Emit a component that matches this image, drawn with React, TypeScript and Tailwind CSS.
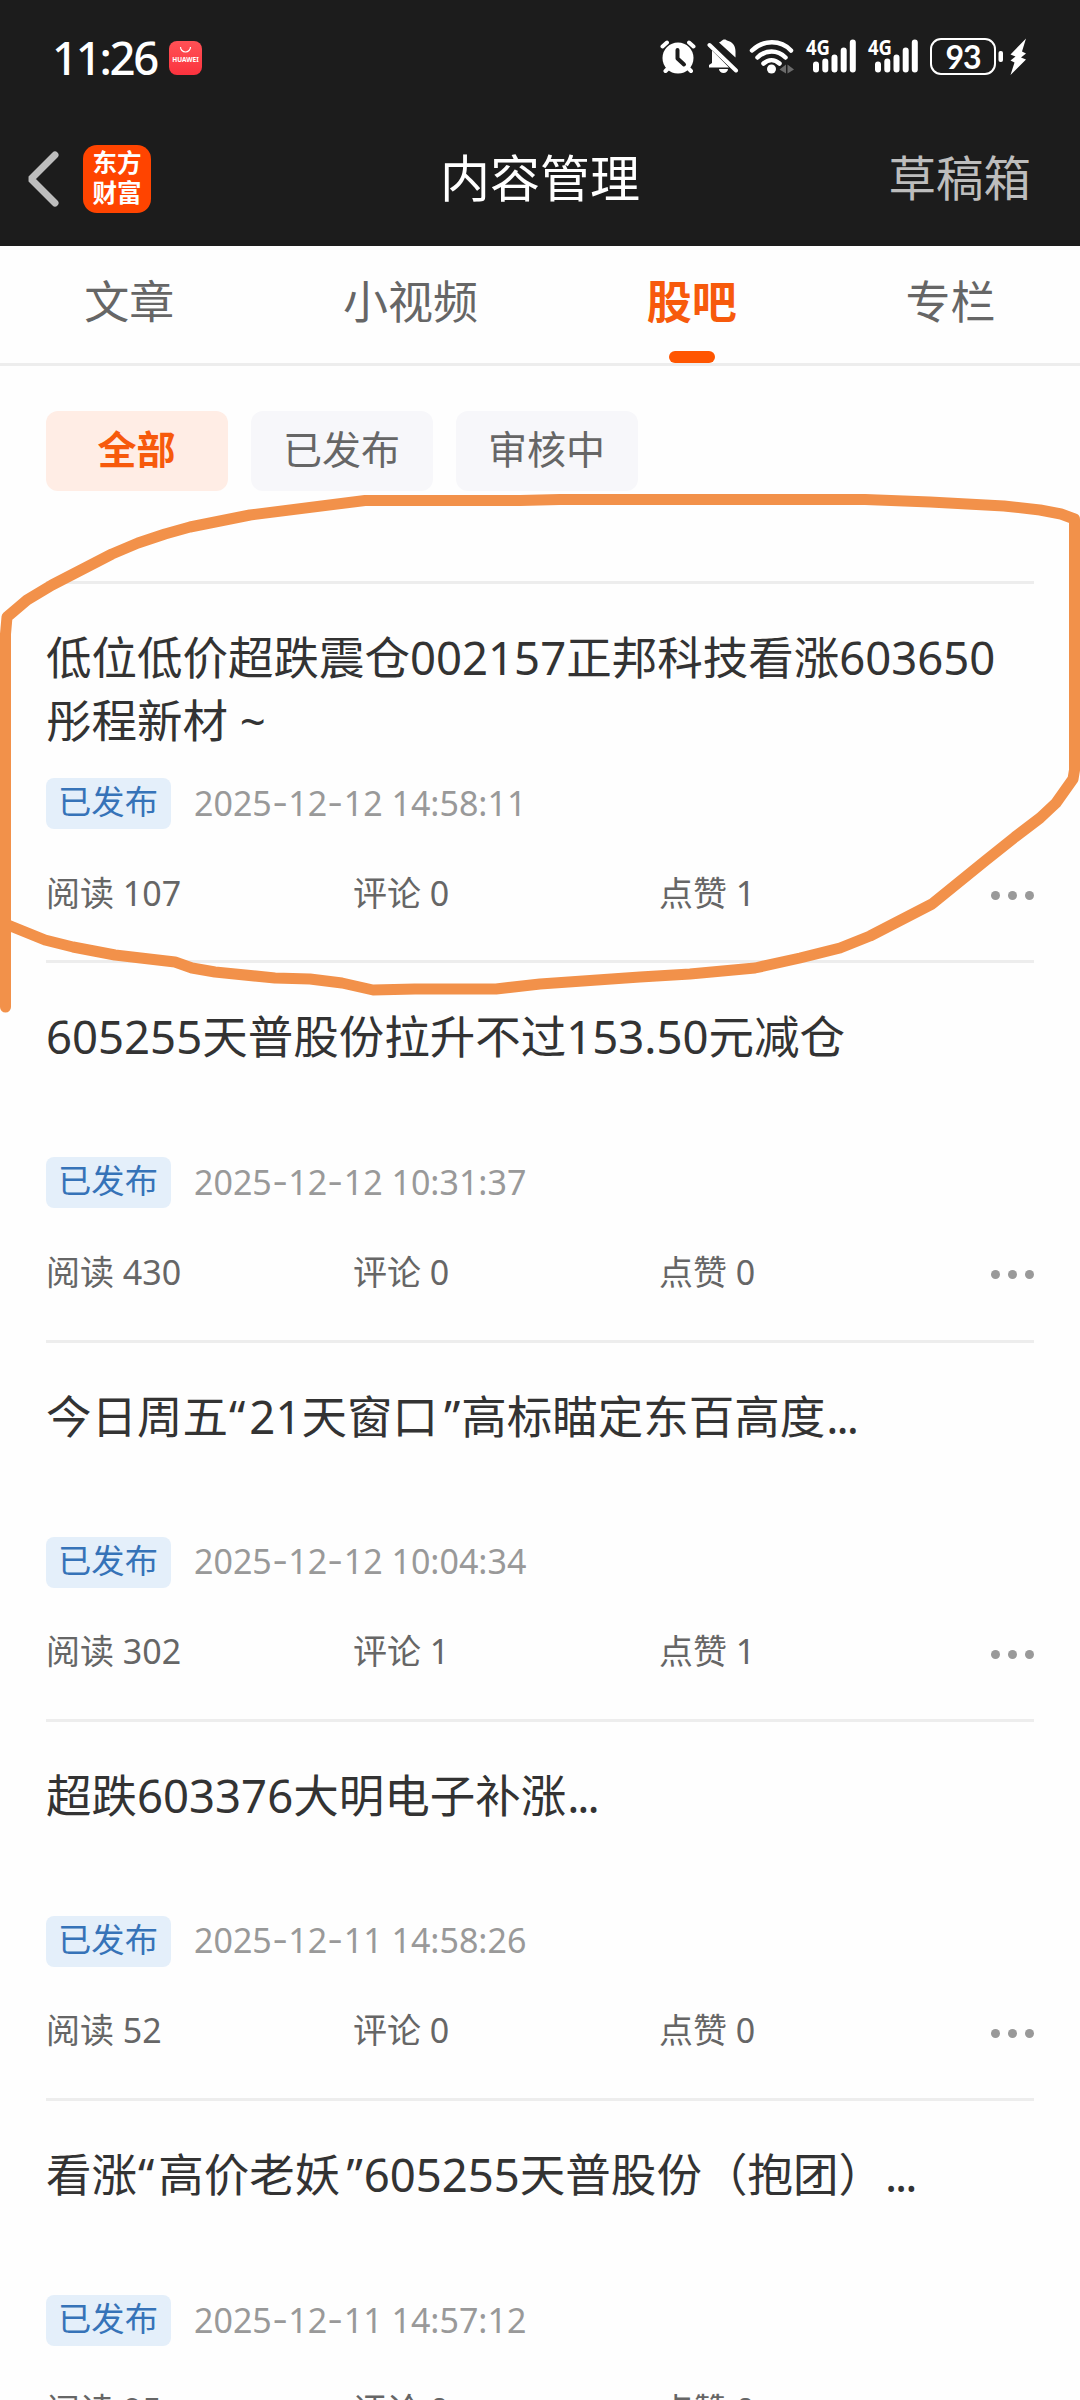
import { useState } from 'react';

interface Post {
  title: string;
  more?: boolean;
  time: string;
  reads: number;
  comments: number;
  likes: number;
}

const TABS = ['文章', '小视频', '股吧', '专栏'];
const FILTERS = ['全部', '已发布', '审核中'];

const POSTS: Post[] = [
  { title: '低位低价超跌震仓002157正邦科技看涨603650彤程新材 ~', time: '2025-12-12 14:58:11', reads: 107, comments: 0, likes: 1 },
  { title: '605255天普股份拉升不过153.50元减仓', time: '2025-12-12 10:31:37', reads: 430, comments: 0, likes: 0 },
  { title: '今日周五“21天窗口”高标瞄定东百高度', more: true, time: '2025-12-12 10:04:34', reads: 302, comments: 1, likes: 1 },
  { title: '超跌603376大明电子补涨', more: true, time: '2025-12-11 14:58:26', reads: 52, comments: 0, likes: 0 },
  { title: '看涨“高价老妖”605255天普股份（抱团）', more: true, time: '2025-12-11 14:57:12', reads: 95, comments: 0, likes: 0 },
];

function Signal() {
  return (
    <svg width="50" height="36" viewBox="0 0 50 36" className="overflow-visible" fill="none" stroke="#fff" strokeWidth="6" strokeLinecap="round">
      <text x="0" y="17" fill="#fff" stroke="none" fontSize="21" fontWeight="700" textLength="24" lengthAdjust="spacingAndGlyphs" fontFamily="Noto Sans, sans-serif">4G</text>
      <path d="M10 26.5v5M19.3 23.5v8M28.5 19.5v12M37.7 12.5v19M46.8 4.5v27" />
    </svg>
  );
}

function StatusBar() {
  return (
    <div className="flex h-[116px] items-start pl-[52px] pt-[38px] text-white">
      <span className="-mt-[1px] h-[41px] w-[117px] whitespace-nowrap text-[45.5px] leading-[40px] font-medium tracking-[-2.3px]">11:26</span>
      <div className="mt-[3px] flex h-[34px] w-[33px] flex-col items-center rounded-[8px] bg-gradient-to-b from-[#ff5055] to-[#fb323e]">
        <svg width="13" height="8" viewBox="0 0 13 8" className="mt-[5px]" fill="none" stroke="#fff" strokeWidth="1.2">
          <path d="M1.5 1a5 5 0 0 0 10 0" />
        </svg>
        <span className="mt-[2px] text-[6.5px] leading-[8px] font-bold">HUAWEI</span>
      </div>
      <div className="ml-[458px] flex h-[36px] items-start">
        <svg width="36" height="36" viewBox="0 0 36 36">
          <g fill="none" stroke="#fff" strokeWidth="4" strokeLinecap="round">
            <path d="M2.5 8.5 7 4.5M33.5 8.5 29 4.5M5.5 33l4-4M31 33l-4-4" />
          </g>
          <circle cx="18" cy="20" r="15.5" fill="#fff" />
          <path d="M17.5 12v8.5l6.5 6" fill="none" stroke="#1c1c1c" strokeWidth="4" strokeLinecap="round" strokeLinejoin="round" />
        </svg>
        <svg width="32" height="36" viewBox="0 0 32 36" className="ml-[11px]">
          <path d="M5 12v13l-3 2v2.500h20zM12 4.500c1-.5 2-1 3-2 1-1.500 4-1.500 5 0 6 1.500 8.500 5.500 8.500 11v6z" fill="#fff" />
          <path d="M12 31h9a4.500 4 0 0 1-9 0z" fill="#fff" />
          <path d="M2.500 5.500 29.500 32" stroke="#1c1c1c" strokeWidth="6.500" />
          <path d="M2.500 7 29 32.500" stroke="#fff" strokeWidth="4" strokeLinecap="round" />
        </svg>
        <svg width="46" height="36" viewBox="0 0 46 36" className="ml-[10px]">
          <g fill="none" stroke="#fff" strokeWidth="4.500" strokeLinecap="round">
            <path d="M3 12.500c11-11 29-11 39 0M8.500 19.500c8-8 20-8 28 0M14.500 25.500c5-4.500 11-4.500 16 0" />
          </g>
          <circle cx="22.500" cy="31" r="4.500" fill="#fff" />
          <path d="M30.500 31.500l6.500-5v9zM45 31.500l-6.500-5v9z" fill="#6b6b6b" />
        </svg>
        <div className="ml-[11px] flex gap-[12px]">
          <Signal />
          <Signal />
        </div>
        <div className="ml-[12px] flex h-[37px] w-[66px] items-center justify-center rounded-[11px] border-[2.500px] border-white font-['Lato',sans-serif] text-[32px] leading-[31px] font-bold tracking-[-1px]">93</div>
        <svg width="32" height="38" viewBox="0 0 32 38" className="ml-[2px]" fill="#fff">
          <rect x="0.500" y="13" width="4.500" height="11" rx="2" />
          <path d="M28 .5 12.500 16.500l5 2-5 4 4 2-4 12.500 15.500-15.500-5-2 5-4-4-2z" />
        </svg>
      </div>
    </div>
  );
}

function NavBar() {
  return (
    <div className="grid h-[130px] grid-cols-[1fr_auto_1fr] items-start px-[27px] leading-[60px]">
      <div className="flex items-center pt-[29px]">
        <svg width="32" height="56" viewBox="0 0 32 56" fill="none" stroke="#bdbdbd" strokeWidth="7" strokeLinejoin="bevel" strokeLinecap="round">
          <path d="M28 4 4 28l24 24" />
        </svg>
        <div className="ml-[24px] flex h-[68px] w-[68px] flex-col items-center justify-center rounded-[14px] bg-[#ff4400] text-[24.500px] leading-[30px] font-bold text-white">
          <span className="-mt-[2px]">东方</span>
          <span>财富</span>
        </div>
      </div>
      <h1 className="pt-[32px] text-[50px] text-white">内容管理</h1>
      <span className="mr-[22px] justify-self-end pt-[32px] text-[47.500px] text-[#bdbdbd]">草稿箱</span>
    </div>
  );
}

// curly quotes get a little extra room on the right of “ and the left of ”
function Title({ text }: { text: string }) {
  return (
    <>
      {text.split(/([“”])/).map((part, i) => {
        if (part === '“') return <span key={i} className="ml-[1px] mr-[4px]">“</span>;
        if (part === '”') return <span key={i} className="ml-[6px] mr-[1px]">”</span>;
        return part;
      })}
    </>
  );
}

function DateText({ value }: { value: string }) {
  return (
    <time className="ml-[23px] -mt-[1px] text-[34px] whitespace-pre text-[#999]">
      {value.split(/(-)/).map((part, i) =>
        part === '-' ? (
          <span key={i} className="inline-block w-[16.500px] -translate-y-[2px] scale-x-[1.35] text-center">-</span>
        ) : part
      )}
    </time>
  );
}

function PostItem({ post }: { post: Post }) {
  return (
    <li className="h-[379.250px] border-t-[3px] border-[#ededed] pt-[42px]">
      <h2 className="h-[126px] text-[45.500px] leading-[63px] text-[#333]">
        <Title text={post.title} />
        {post.more && <span className="ml-[1px] tracking-[-2px]">...</span>}
      </h2>
      <div className="mt-[26px] flex h-[51px] items-center">
        <span className="flex h-[51px] w-[125px] items-center justify-center rounded-[8px] bg-[#e4effa] pr-[1px] pb-[3px] text-[33.300px] text-[#3673b8]">已发布</span>
        <DateText value={post.time} />
      </div>
      <div className="mt-[40px] flex h-[48px] items-center text-[34px] text-[#666]">
        <span className="w-[307px]">阅读 {post.reads}</span>
        <span className="w-[306px]">评论 {post.comments}</span>
        <span>点赞 {post.likes}</span>
        <button className="mt-[5px] ml-auto flex gap-[8px]">
          <i className="size-[9px] rounded-full bg-[#999]" />
          <i className="size-[9px] rounded-full bg-[#999]" />
          <i className="size-[9px] rounded-full bg-[#999]" />
        </button>
      </div>
    </li>
  );
}

export default function App() {
  const [tab, setTab] = useState('股吧');
  const [filter, setFilter] = useState('全部');

  return (
    <div className="relative h-[2400px] w-[1080px] overflow-hidden bg-[#fefefe] font-['Noto_Sans','Noto_Sans_CJK_SC',sans-serif]">
      <header className="bg-[#1c1c1c]">
        <StatusBar />
        <NavBar />
      </header>

      <nav className="flex h-[120px] justify-around border-b-[3px] border-[#ededed]">
        {TABS.map((t) => (
          <button
            key={t}
            onClick={() => setTab(t)}
            className={`flex flex-col items-center justify-between pt-[26px] text-[45px] leading-[60px] ${
              tab === t ? 'font-bold text-[#f75a0c]' : 'text-[#666]'
            }`}
          >
            {t}
            {tab === t && <span className="h-[12px] w-[46px] rounded-full bg-[#ff5500]" />}
          </button>
        ))}
      </nav>

      <div className="flex h-[215px] gap-[23px] px-[46px] pt-[45px]">
        {FILTERS.map((f) => (
          <button
            key={f}
            onClick={() => setFilter(f)}
            className={`h-[80px] w-[182px] rounded-[12px] pr-[1px] pb-[4px] text-[39px] leading-[76px] ${
              filter === f ? 'bg-[#ffede5] font-bold text-[#f75a0c]' : 'bg-[#f7f7fa] text-[#666]'
            }`}
          >
            {f}
          </button>
        ))}
      </div>

      <ul className="px-[46px]">
        {POSTS.map((p) => (
          <PostItem key={p.time} post={p} />
        ))}
      </ul>

      {/* hand-drawn marker loop around the first post */}
      <svg className="pointer-events-none absolute top-0 left-0" width="1080" height="1020" viewBox="0 0 1080 1020" fill="none" stroke="#f2914a" strokeWidth="11" strokeLinecap="round" strokeLinejoin="round">
        <path d="M5.500 1007V634L7 617 27 600 52 585 112 554 138 543 165 534 190 527 250 515 365 500.500H520L560 499.500H865L930 502 1004 506 1040 510 1061 514 1074.500 519V770L1073 779 1056 803 1040 818 1015 837 985 861 932 904 870 936 840 948 800 958 755 968 690 974 640 977 540 984 496 989H415L373 990 342 983 310 979 275 978 215 972 192 968 175 962 115 955 73 947 45 940 8 925" />
      </svg>
    </div>
  );
}
